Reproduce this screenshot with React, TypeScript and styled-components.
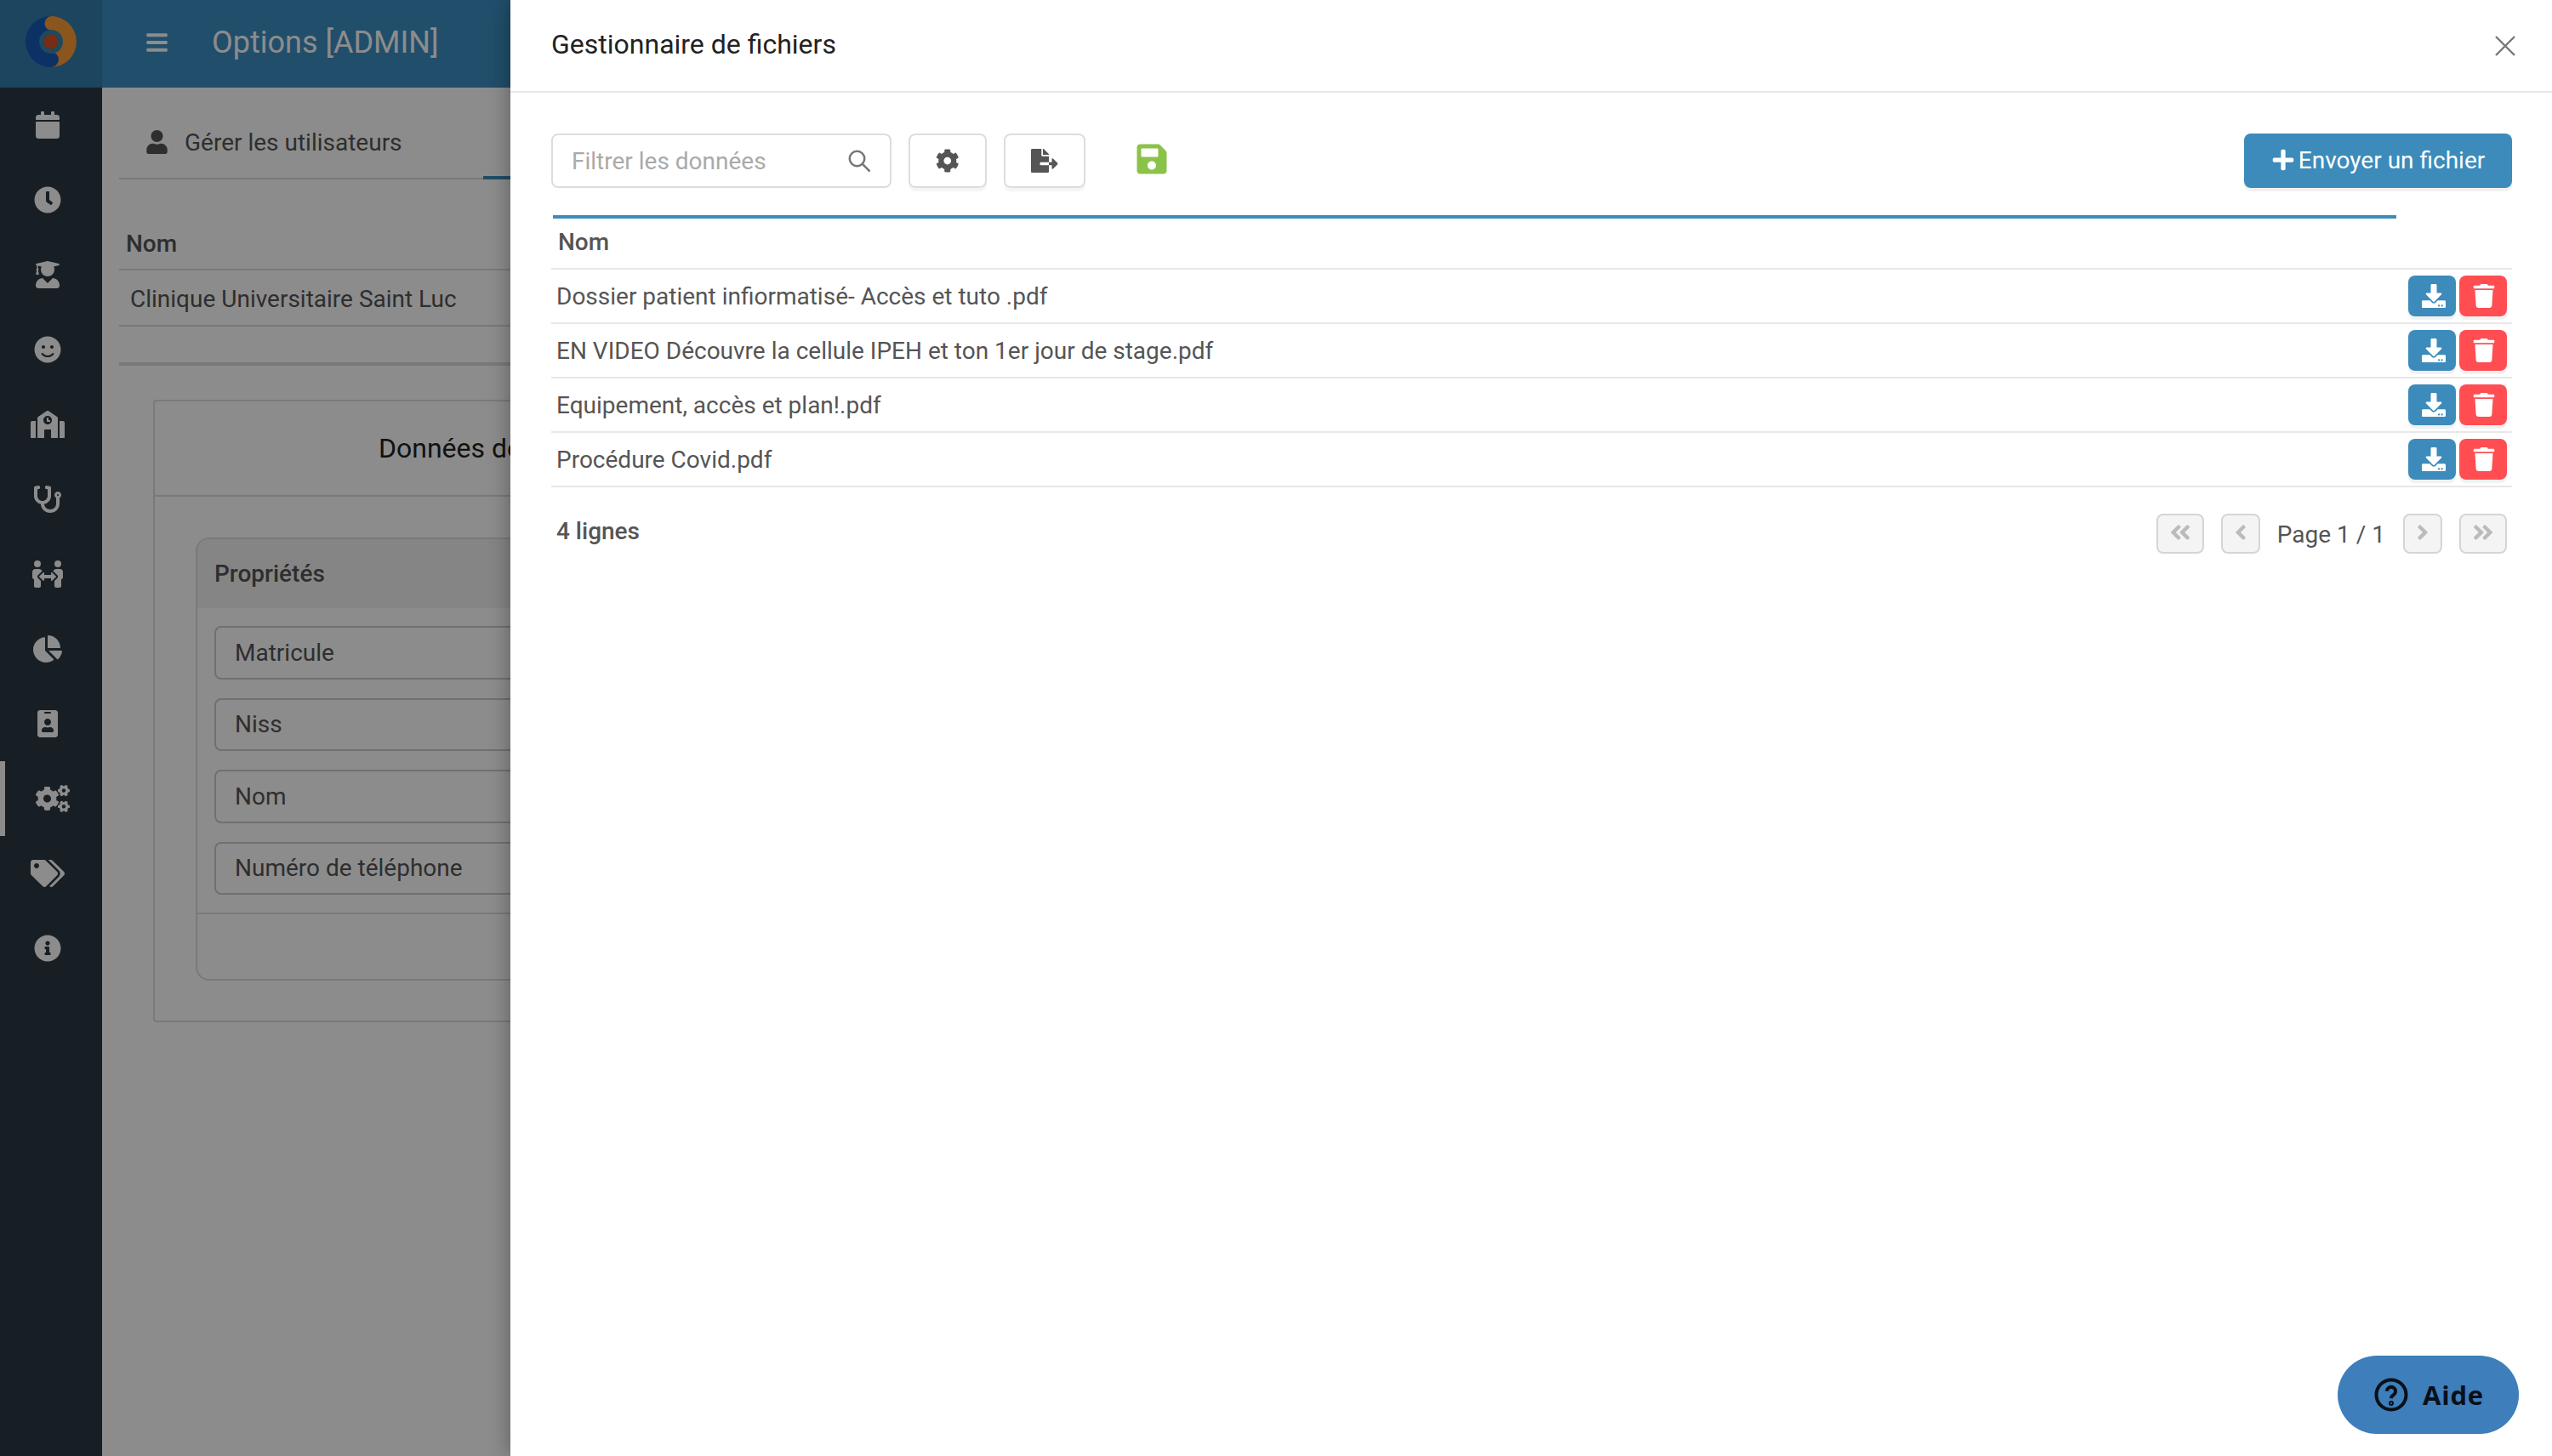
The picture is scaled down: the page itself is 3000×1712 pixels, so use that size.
import { createGlobalStyle, styled } from 'styled-components';
import {
  FaAngleDoubleLeft,
  FaAngleDoubleRight,
  FaAngleLeft,
  FaAngleRight,
  FaBars,
  FaCalendar,
  FaChartPie,
  FaClock,
  FaCog,
  FaCogs,
  FaDownload,
  FaFileExport,
  FaIdBadge,
  FaInfoCircle,
  FaPeopleArrows,
  FaPlus,
  FaSave,
  FaSchool,
  FaSmile,
  FaStethoscope,
  FaTags,
  FaTrash,
  FaUser,
  FaUserGraduate,
} from 'react-icons/fa';

const GlobalStyle = createGlobalStyle`
  html, body {
    margin: 0;
    padding: 0;
    background: #fff;
  }
  * {
    box-sizing: border-box;
  }
`;

const NAV_ICONS = [
  FaCalendar,
  FaClock,
  FaUserGraduate,
  FaSmile,
  FaSchool,
  FaStethoscope,
  FaPeopleArrows,
  FaChartPie,
  FaIdBadge,
  FaCogs,
  FaTags,
  FaInfoCircle,
];

const PROPERTIES = ['Matricule', 'Niss', 'Nom', 'Numéro de téléphone'];

const FILES = [
  'Dossier patient infiormatisé- Accès et tuto .pdf',
  'EN VIDEO Découvre la cellule IPEH et ton 1er jour de stage.pdf',
  'Equipement, accès et plan!.pdf',
  'Procédure Covid.pdf',
];

// ========== PAGE BEHIND THE DRAWER ==========

const Page = styled.div`
  position: relative;
  width: 3000px;
  height: 1712px;
  overflow: hidden;
  display: flex;
  font-family: Roboto, sans-serif;
  color: #555;
  background: #fff;
`;

const Sidebar = styled.aside`
  width: 120px;
  flex-shrink: 0;
  background: #2a3843;
  display: flex;
  flex-direction: column;
`;

const LogoBox = styled.div`
  height: 103px;
  background: #347fae;
  display: flex;
  align-items: flex-start;
  justify-content: center;
  padding-top: 19px;
`;

const NavItem = styled.div<{ $active?: boolean }>`
  height: 88px;
  display: flex;
  align-items: center;
  justify-content: center;
  color: #fff;
  font-size: 32px;
  border-left: 6px solid ${p => (p.$active ? '#fff' : 'transparent')};
  padding-right: ${p => (p.$active ? '2px' : '14px')};

  /* react-icons boxes are square, the widest glyphs here are 640x512 */
  svg {
    width: 1.25em;
    height: 1em;
  }
`;

const Main = styled.main`
  flex: 1;
  display: flex;
  flex-direction: column;
`;

const TopBar = styled.header`
  height: 103px;
  background: #3d8fc3;
  color: #fff;
  display: flex;
  align-items: center;
  padding: 0 0 3px 52px;
  gap: 52px;
  font-size: 36px;

  svg {
    width: 25px;
    height: 28px;
  }
`;

const Content = styled.div`
  padding: 0 20px;
`;

const Tabs = styled.div`
  display: flex;
  height: 108px;
`;

const Tab = styled.div<{ $active?: boolean }>`
  width: ${p => (p.$active ? '600px' : '428px')};
  border-bottom: ${p => (p.$active ? '4px solid #3d8bbb' : '2px solid #ddd')};
  display: flex;
  align-items: center;
  gap: 20px;
  padding: 22px 0 0 32px;
  font-size: 28px;

  svg {
    width: 25px;
    height: 28px;
  }
`;

const BgTable = styled.div`
  margin-top: 41px;
  border-bottom: 4px solid #ddd;
`;

const BgHead = styled.div`
  height: 66px;
  border-bottom: 2px solid #ddd;
  padding: 18px 8px 0;
  font-size: 28px;
  font-weight: 500;
`;

const BgRow = styled.div`
  height: 66px;
  border-bottom: 2px solid #ddd;
  display: flex;
  align-items: center;
  padding: 2px 0 0 13px;
  font-size: 28px;
`;

const BgBody = styled.div`
  height: 42px;
`;

const Panel = styled.section`
  margin: 40px 0 0 40px;
  height: 732px;
  width: 1400px;
  border: 2px solid #ddd;
  border-radius: 4px;
`;

const PanelTitle = styled.div`
  height: 112px;
  border-bottom: 2px solid #ddd;
  display: flex;
  align-items: center;
  padding-left: 263px;
  font-size: 32px;
  color: #222;
`;

const Card = styled.div`
  margin: 48px 0 0 48px;
  width: 1300px;
  height: 521px;
  border: 2px solid #ddd;
  border-radius: 16px;
  overflow: hidden;
`;

const CardHead = styled.div`
  height: 81px;
  background: #f2f2f2;
  display: flex;
  align-items: center;
  padding-left: 20px;
  font-size: 28px;
  font-weight: 500;
`;

const CardBody = styled.div`
  padding: 21px 20px 0;
  height: 360px;
  border-bottom: 2px solid #ddd;
  display: flex;
  flex-direction: column;
  gap: 22px;
`;

const PropInput = styled.div`
  height: 62.5px;
  border: 2px solid #ccc;
  border-radius: 8px;
  display: flex;
  align-items: center;
  padding-left: 22px;
  font-size: 28px;
`;

const Overlay = styled.div`
  position: absolute;
  inset: 0;
  background: rgba(0, 0, 0, 0.45);
`;

// ========== DRAWER ==========

const Drawer = styled.div`
  position: absolute;
  top: 0;
  right: 0;
  bottom: 0;
  width: 2400px;
  background: #fff;
  box-shadow: 0 0 24px rgba(0, 0, 0, 0.35);
  display: flex;
  flex-direction: column;
`;

const DrawerHeader = styled.div`
  height: 109px;
  border-bottom: 2px solid #e8e8e8;
  display: flex;
  align-items: center;
  justify-content: space-between;
  padding: 0 43px 3px 48px;
  font-size: 32px;
  color: #222;
`;

const CloseIcon = styled.svg`
  width: 24px;
  height: 24px;
  stroke: #777;
  stroke-width: 2.4;
  fill: none;
  margin-top: 3px;
`;

const DrawerBody = styled.div`
  padding: 48px 47px 0 48px;
  display: flex;
  flex-direction: column;
`;

const Toolbar = styled.div`
  display: flex;
  align-items: center;
  height: 64px;
`;

const SearchBox = styled.div`
  width: 400px;
  height: 64px;
  border: 2px solid #ddd;
  border-radius: 8px;
  display: flex;
  align-items: center;
  justify-content: space-between;
  padding: 0 23px 0 22px;
  font-size: 28px;
  color: #aaa;
`;

const SearchIcon = styled.svg`
  width: 30px;
  height: 30px;
  stroke: #777;
  stroke-width: 2;
  fill: none;
  margin-right: -2px;
`;

const ToolButton = styled.div<{ $w: number }>`
  width: ${p => p.$w}px;
  height: 64px;
  margin-left: 20px;
  padding-bottom: 1px;
  border: 2px solid #ddd;
  border-radius: 8px;
  box-shadow: 0 4px 0 #f5f5f5;
  display: flex;
  align-items: center;
  justify-content: center;
  font-size: 28px;
  color: #555;

  svg {
    width: 1.125em;
    height: 1em;
  }
`;

const SaveButton = styled.div`
  margin-left: 58px;
  margin-top: -4px;
  font-size: 40px;
  color: #8bc34a;
  display: flex;
`;

const UploadButton = styled.div`
  margin-left: auto;
  width: 315px;
  height: 64px;
  padding-bottom: 2px;
  background: #3d8bbb;
  border-radius: 8px;
  box-shadow: 0 4px 0 #f2f2f2;
  color: #fff;
  font-size: 28px;
  display: flex;
  align-items: center;
  justify-content: center;
  gap: 4px;
`;

const BlueRule = styled.div`
  margin: 32px 0 0 2px;
  width: 2167px;
  height: 4px;
  background: #3d8bbb;
`;

const TableHead = styled.div`
  height: 60px;
  border-bottom: 2px solid #e8e8e8;
  display: flex;
  align-items: center;
  padding: 0 0 3px 8px;
  font-size: 28px;
  font-weight: 500;
  color: #555;
`;

const FileRow = styled.div`
  height: 64px;
  border-bottom: 2px solid #e8e8e8;
  display: flex;
  align-items: center;
  justify-content: space-between;
  padding: 0 6px 0 6px;
  font-size: 28px;
  color: #555;
`;

const RowActions = styled.div`
  display: flex;
  gap: 4px;
`;

const ActionButton = styled.div<{ $danger?: boolean }>`
  width: 56px;
  height: 48px;
  border-radius: 8px;
  background: ${p => (p.$danger ? '#ff4d52' : '#3d8bbb')};
  box-shadow: 0 4px 0 #f2f2f2;
  color: #fff;
  font-size: 28px;
  display: flex;
  align-items: center;
  justify-content: center;
  padding-left: ${p => (p.$danger ? '1px' : '4px')};
`;

const Footer = styled.div`
  display: flex;
  align-items: center;
  justify-content: space-between;
  padding: 31px 6px 0;
  font-size: 28px;
  color: #555;
`;

const RowCount = styled.div`
  font-weight: 500;
  margin-bottom: 7px;
`;

const Pager = styled.div`
  display: flex;
  align-items: center;
`;

const PageButton = styled.div<{ $w: number; $gap?: number }>`
  width: ${p => p.$w}px;
  height: 47px;
  margin-left: ${p => p.$gap ?? 0}px;
  background: #f4f4f4;
  border: 2px solid #d5d5d5;
  border-radius: 8px;
  color: #bbb;
  font-size: 28px;
  display: flex;
  align-items: center;
  justify-content: center;
  padding-bottom: 4px;
`;

const PageLabel = styled.div`
  margin: 2px 21px 0 20px;
`;

const HelpButton = styled.div`
  position: absolute;
  left: 2148px;
  top: 1594px;
  width: 213px;
  height: 92px;
  border-radius: 46px;
  background: #3d7ebb;
  color: #0a1018;
  font-family: 'Open Sans', sans-serif;
  font-weight: 700;
  font-size: 31px;
  letter-spacing: 0.8px;
  display: flex;
  align-items: center;
  justify-content: center;
  gap: 17px;
  padding-left: 2px;
`;

const HelpIcon = styled.svg`
  width: 40px;
  height: 40px;
  fill: none;
  stroke: currentColor;
  stroke-width: 2.4;
`;

// ========== COMPONENT ==========

const Logo = () => (
  <svg width="60" height="60" viewBox="0 0 60 60">
    <circle cx="30" cy="30" r="30" fill="#1659b9" />
    <path d="M30 0a30 30 0 0 1 0 60z" fill="#fd9c37" />
    <circle cx="31" cy="8.5" r="8.5" fill="#fd9c37" />
    <circle cx="30" cy="51" r="9" fill="#1659b9" />
    <circle cx="30" cy="30" r="14" fill="#3a86a8" />
    <circle cx="30" cy="30" r="8.5" fill="#da5024" />
  </svg>
);

export default function App() {
  return (
    <>
      <GlobalStyle />
      <Page>
        <Sidebar>
          <LogoBox>
            <Logo />
          </LogoBox>
          {NAV_ICONS.map((Icon, idx) => (
            <NavItem key={idx} $active={idx === 9}>
              <Icon />
            </NavItem>
          ))}
        </Sidebar>
        <Main>
          <TopBar>
            <FaBars />
            <span>Options [ADMIN]</span>
          </TopBar>
          <Content>
            <Tabs>
              <Tab>
                <FaUser />
                Gérer les utilisateurs
              </Tab>
              <Tab $active />
            </Tabs>
            <BgTable>
              <BgHead>Nom</BgHead>
              <BgRow>Clinique Universitaire Saint Luc</BgRow>
              <BgBody />
            </BgTable>
            <Panel>
              <PanelTitle>Données de</PanelTitle>
              <Card>
                <CardHead>Propriétés</CardHead>
                <CardBody>
                  {PROPERTIES.map(prop => (
                    <PropInput key={prop}>{prop}</PropInput>
                  ))}
                </CardBody>
              </Card>
            </Panel>
          </Content>
        </Main>
        <Overlay />
        <Drawer>
          <DrawerHeader>
            Gestionnaire de fichiers
            <CloseIcon viewBox="0 0 24 24">
              <path d="M1 1l22 22M23 1L1 23" />
            </CloseIcon>
          </DrawerHeader>
          <DrawerBody>
            <Toolbar>
              <SearchBox>
                Filtrer les données
                <SearchIcon viewBox="0 0 24 24">
                  <circle cx="10" cy="10" r="7" />
                  <path d="M15 15l7 7" />
                </SearchIcon>
              </SearchBox>
              <ToolButton $w={92}>
                <FaCog />
              </ToolButton>
              <ToolButton $w={96}>
                <FaFileExport />
              </ToolButton>
              <SaveButton>
                <FaSave />
              </SaveButton>
              <UploadButton>
                <FaPlus size={28} />
                Envoyer un fichier
              </UploadButton>
            </Toolbar>
            <BlueRule />
            <TableHead>Nom</TableHead>
            {FILES.map(file => (
              <FileRow key={file}>
                {file}
                <RowActions>
                  <ActionButton>
                    <FaDownload />
                  </ActionButton>
                  <ActionButton $danger>
                    <FaTrash />
                  </ActionButton>
                </RowActions>
              </FileRow>
            ))}
            <Footer>
              <RowCount>4 lignes</RowCount>
              <Pager>
                <PageButton $w={56}>
                  <FaAngleDoubleLeft />
                </PageButton>
                <PageButton $w={46} $gap={20}>
                  <FaAngleLeft />
                </PageButton>
                <PageLabel>Page 1 / 1</PageLabel>
                <PageButton $w={46}>
                  <FaAngleRight />
                </PageButton>
                <PageButton $w={56} $gap={20}>
                  <FaAngleDoubleRight />
                </PageButton>
              </Pager>
            </Footer>
          </DrawerBody>
          <HelpButton>
            <HelpIcon viewBox="0 0 24 24">
              <circle cx="12" cy="12" r="10.5" />
              <path d="M9 9.5a3 3 0 1 1 4.5 2.6c-1 .6-1.5 1.1-1.5 2.4" />
              <circle cx="12" cy="18" r="0.6" />
            </HelpIcon>
            Aide
          </HelpButton>
        </Drawer>
      </Page>
    </>
  );
}
